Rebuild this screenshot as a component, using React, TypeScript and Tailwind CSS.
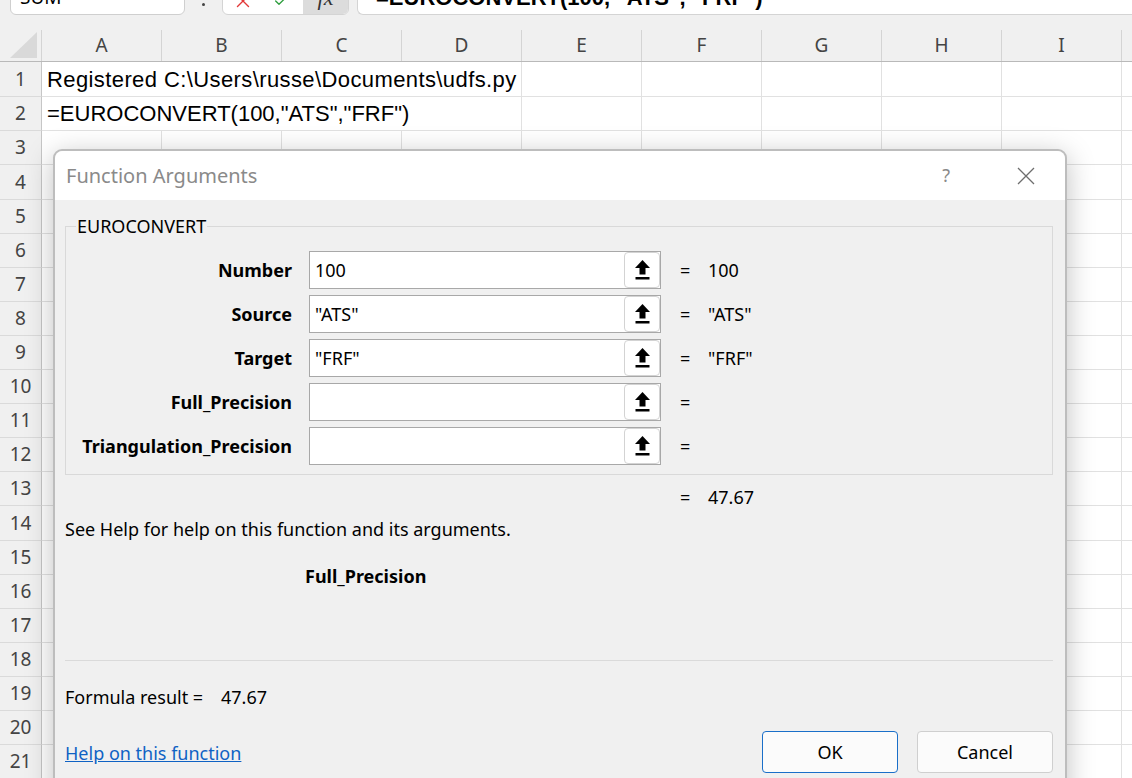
import { ChevronDown, X, Check } from 'lucide-react';

const columns = ['A', 'B', 'C', 'D', 'E', 'F', 'G', 'H', 'I'];
const rows = Array.from({ length: 21 }, (_, i) => i + 1);
// a few rows come out a pixel taller in the screenshot
const tallRows = [1, 4, 14];

const cellText: Record<number, string> = {
  1: 'Registered C:\\Users\\russe\\Documents\\udfs.py',
  2: '=EUROCONVERT(100,"ATS","FRF")',
};

const args = [
  { name: 'Number', value: '100', result: '100' },
  { name: 'Source', value: '"ATS"', result: '"ATS"' },
  { name: 'Target', value: '"FRF"', result: '"FRF"' },
  { name: 'Full_Precision', value: '', result: '' },
  { name: 'Triangulation_Precision', value: '', result: '' },
];

function RefEditIcon() {
  return (
    <svg width="15" height="20" viewBox="0 0 15 20">
      <path d="M7.5 0 L15 8 H10.5 V14.5 H4.5 V8 H0 Z" fill="#000" />
      <rect x="0.5" y="17" width="14" height="2.5" fill="#000" />
    </svg>
  );
}

function CornerTriangle() {
  return (
    <svg width="27" height="26" viewBox="0 0 27 26">
      <path d="M27 0 V26 H0 Z" fill="#d9d9d9" />
    </svg>
  );
}

function Sheet() {
  return (
    <div className="font-['Noto_Sans',sans-serif]">
      {/* column headers */}
      <div className="flex h-[32px] border-b border-[#b9b9b9] bg-[#f0f0f0]">
        <div className="flex w-[42px] shrink-0 items-end justify-end border-r border-[#d4d4d4] pb-[3px] pr-[4px]">
          <CornerTriangle />
        </div>
        {columns.map((c) => (
          <div
            key={c}
            className="flex w-[120px] shrink-0 items-center justify-center border-r border-[#d4d4d4] text-[19px] text-[#444]"
          >
            {c}
          </div>
        ))}
        <div className="flex-1" />
      </div>

      {/* rows */}
      {rows.map((r) => (
        <div key={r} className={`flex bg-white ${tallRows.includes(r) ? 'h-[35px]' : 'h-[34px]'}`}>
          <div className="flex w-[42px] shrink-0 items-center justify-center border-b border-r border-[#c6c6c6] border-b-[#dadada] bg-[#f0f0f0] text-[19px] text-[#444]">
            {r}
          </div>
          {cellText[r] ? (
            <div
              className={`flex w-[480px] shrink-0 items-center whitespace-nowrap border-b border-r border-[#e1e1e1] pl-[5px] font-['Liberation_Sans',Arial,sans-serif] text-[22px] text-black ${
                r === 1 ? 'tracking-[0.4px]' : ''
              }`}
            >
              {cellText[r]}
            </div>
          ) : (
            columns.slice(0, 4).map((c) => (
              <div key={c} className="w-[120px] shrink-0 border-b border-r border-[#e1e1e1]" />
            ))
          )}
          {columns.slice(4).map((c) => (
            <div key={c} className="w-[120px] shrink-0 border-b border-r border-[#e1e1e1]" />
          ))}
          <div className="flex-1 border-b border-[#e1e1e1]" />
        </div>
      ))}
    </div>
  );
}

function FormulaBar() {
  return (
    <div className="h-[30px] overflow-hidden bg-[#f0f0f0]">
      <div className="-mt-[20px] flex h-[35px] items-stretch">
        <div className="ml-[10px] flex w-[175px] items-center justify-between rounded-[6px] border border-[#cfcfcf] bg-white pl-[9px] pr-[10px] font-['Noto_Sans',sans-serif] text-[19px] text-black">
          <span>SUM</span>
          <ChevronDown className="h-[12px] w-[12px] text-[#555]" />
        </div>
        <div className="flex w-[37px] items-end justify-center pb-[9px]">
          <span className="h-[3px] w-[3px] rounded-full bg-[#444]" />
        </div>
        <div className="flex w-[127px] items-stretch rounded-[6px] border border-[#d4d4d4] bg-white">
          <div className="flex w-[40px] items-center justify-center">
            <X className="mt-[6px] h-[22px] w-[22px] text-[#e23838]" strokeWidth={1.5} />
          </div>
          <div className="flex items-center justify-center pl-[10px] pr-[14px]">
            <Check className="mt-[6px] h-[16px] w-[16px] text-[#2e9e3e]" strokeWidth={2} />
          </div>
          <div className="flex flex-1 items-center justify-center rounded-r-[5px] bg-[#dcdcdc] font-['Liberation_Serif',serif] text-[22px] italic text-[#333]">
            fx
          </div>
        </div>
        <div className="ml-[8px] flex flex-1 items-center rounded-l-[6px] border border-r-0 border-[#d4d4d4] bg-white pl-[18px] font-['Liberation_Sans',Arial,sans-serif] text-[22px] font-bold text-black">
          =EUROCONVERT(100, "ATS", "FRF")
        </div>
      </div>
    </div>
  );
}

function FunctionArguments() {
  return (
    <div className="absolute left-[53px] top-[149px] h-[660px] w-[1014px] rounded-t-[9px] border-2 border-[#bdbdbd] bg-[#f0f0f0] font-['Noto_Sans',sans-serif] text-[18px] text-black shadow-[0_6px_28px_rgba(0,0,0,0.25)]">
      <div className="flex h-[49px] items-center rounded-t-[8px] bg-white pl-[11px]">
        <span className="text-[20px] text-[#8a8a8a]">Function Arguments</span>
        <span className="ml-auto text-[18px] text-[#8a8a8a]">?</span>
        <div className="ml-[67px] mr-[30px] flex items-center">
          <svg width="18" height="18" viewBox="0 0 18 18">
            <path d="M1 1 L17 17 M17 1 L1 17" stroke="#6e6e6e" strokeWidth="1.3" />
          </svg>
        </div>
      </div>

      <div className="pl-[10px] pr-[12px]">
        <fieldset className="mt-[15px] border border-[#d9d9d9] pb-[9px]">
          <legend className="ml-[10px] px-[1px] text-[18px] leading-[22px]">EUROCONVERT</legend>
          <div className="mt-[14px] flex flex-col gap-[6px]">
            {args.map((a) => (
              <div key={a.name} className="flex h-[38px] items-center">
                <div className="w-[226px] text-right font-bold">{a.name}</div>
                <div className="ml-[17px] flex h-[38px] w-[352px] border border-[#a8a8a8] bg-white">
                  <div className="flex flex-1 items-center pl-[5px]">{a.value}</div>
                  <div className="flex w-[36px] items-center justify-center rounded-[4px] border border-[#d3d3d3] bg-white">
                    <RefEditIcon />
                  </div>
                </div>
                <span className="ml-[19px] w-[28px]">=</span>
                <span>{a.result}</span>
              </div>
            ))}
          </div>
        </fieldset>

        <div className="mt-[11px] flex h-[22px] items-center pl-[615px]">
          <span className="w-[28px]">=</span>
          <span>47.67</span>
        </div>

        <div className="mt-[10px] flex h-[22px] items-center">
          See Help for help on this function and its arguments.
        </div>

        <div className="mt-[25px] flex h-[22px] items-center pl-[240px] font-bold">Full_Precision</div>

        <div className="mt-[73px] h-px bg-[#dadada]" />

        <div className="mt-[25px] flex h-[22px] items-center">
          <span className="w-[156px]">Formula result =</span>
          <span>47.67</span>
        </div>

        <div className="mt-[23px] flex h-[42px] items-center">
          <span className="mt-[2px] text-[#0f62c4] underline">Help on this function</span>
          <button className="ml-auto h-[42px] w-[136px] rounded-[4px] border border-[#1a6fc9] bg-[#fbfbfb]">
            OK
          </button>
          <button className="ml-[19px] h-[42px] w-[136px] rounded-[4px] border border-[#cfcfcf] bg-[#fbfbfb]">
            Cancel
          </button>
        </div>
      </div>
    </div>
  );
}

export default function App() {
  return (
    <div className="relative h-[778px] w-[1132px] overflow-hidden bg-white">
      <FormulaBar />
      <Sheet />
      <FunctionArguments />
    </div>
  );
}
